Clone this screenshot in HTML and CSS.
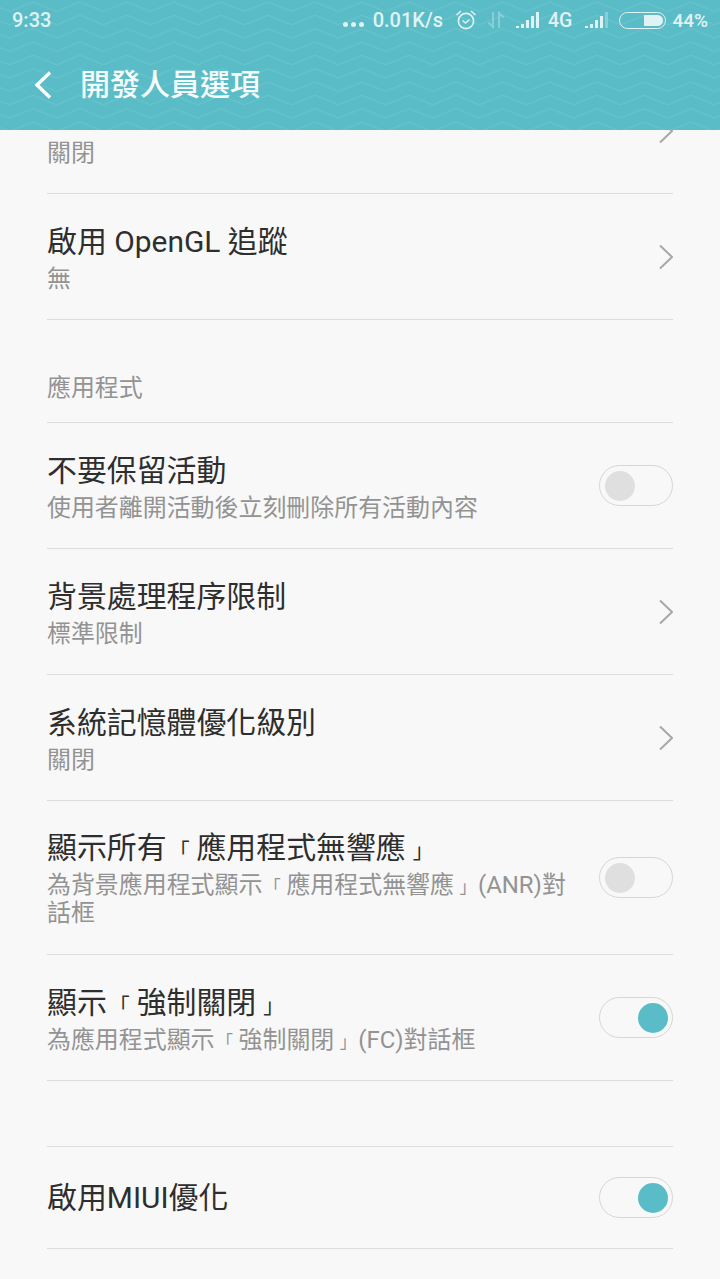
FILE: index.html
```html
<!DOCTYPE html>
<html lang="zh-Hant">
<head>
  <meta charset="UTF-8" />
  <title>開發人員選項</title>
  <link rel="stylesheet" href="styles.css">
</head>
<body>

<header class="topbar">
  <svg class="waves" width="720" height="130" aria-hidden="true">
    <defs>
      <pattern id="wave" width="47" height="13.33" patternUnits="userSpaceOnUse" x="9.5">
        <path d="M0 11.5 L23.5 2 L47 11.5" fill="none" stroke="#6bc5ce" stroke-width="1"/>
      </pattern>
    </defs>
    <rect width="720" height="130" fill="url(#wave)"/>
  </svg>

  <div class="statusbar">
    <span class="time">9:33</span>
    <div class="status-right">
      <span class="dots"><i></i><i></i><i></i></span>
      <span class="speed">0.01K/s</span>
      <svg class="alarm" width="22" height="22" viewBox="0 0 22 22">
        <circle cx="11" cy="12" r="7.6" fill="none" stroke="#e0f3f4" stroke-width="1.6"/>
        <path d="M7.5 11.5 L10.5 14 L14.5 10.5" fill="none" stroke="#e0f3f4" stroke-width="1.4"/>
        <path d="M1.5 6 L6 2 M20.5 6 L16 2" fill="none" stroke="#e0f3f4" stroke-width="1.6"/>
      </svg>
      <svg class="data" width="18" height="18" viewBox="0 0 18 18">
        <path d="M6 1 V16 L1.5 11.5 M12 17 V2 L16.5 6.5" fill="none" stroke="#a5dce0" stroke-opacity="0.6" stroke-width="2"/>
      </svg>
      <svg class="signal" width="25" height="18" viewBox="0 0 25 18">
        <path d="M1 15h3v2H1z M6 13h3v4H6z M11 9h3v8h-3z M16 5h3v12h-3z M21 1h3v16h-3z" fill="#e0f3f4"/>
      </svg>
      <span class="net">4G</span>
      <svg class="signal2" width="25" height="18" viewBox="0 0 25 18">
        <path d="M1 15h3v2H1z M6 13h3v4H6z M11 9h3v8h-3z M16 5h3v12h-3z" fill="#e0f3f4"/>
        <path d="M21 1h3v16h-3z" fill="#a5dce0" fill-opacity="0.6"/>
      </svg>
      <span class="battery"><b></b></span>
      <span class="percent">44%</span>
    </div>
  </div>

  <div class="titlebar">
    <svg class="back" width="22" height="30" viewBox="0 0 22 30">
      <path d="M18 2.5 L5 15 L18 27.5" fill="none" stroke="#fff" stroke-width="3.4"/>
    </svg>
    <h1>開發人員選項</h1>
  </div>
</header>

<main class="list">
  <div class="row cut">
    <div class="text"><p class="sub">關閉</p></div>
    <svg class="chev" width="15" height="26" viewBox="0 0 15 26"><path d="M2 1.5 L14 13 L2 24.5" /></svg>
  </div>
  <div class="row">
    <div class="text"><p class="name">啟用 OpenGL 追蹤</p><p class="sub">無</p></div>
    <svg class="chev" width="15" height="26" viewBox="0 0 15 26"><path d="M2 1.5 L14 13 L2 24.5" /></svg>
  </div>
  <div class="section">應用程式</div>
  <div class="row">
    <div class="text"><p class="name">不要保留活動</p><p class="sub">使用者離開活動後立刻刪除所有活動內容</p></div>
    <span class="switch"></span>
  </div>
  <div class="row">
    <div class="text"><p class="name">背景處理程序限制</p><p class="sub">標準限制</p></div>
    <svg class="chev" width="15" height="26" viewBox="0 0 15 26"><path d="M2 1.5 L14 13 L2 24.5" /></svg>
  </div>
  <div class="row">
    <div class="text"><p class="name">系統記憶體優化級別</p><p class="sub">關閉</p></div>
    <svg class="chev" width="15" height="26" viewBox="0 0 15 26"><path d="M2 1.5 L14 13 L2 24.5" /></svg>
  </div>
  <div class="row tall">
    <div class="text"><p class="name">顯示所有<span class="qo">「</span>應用程式無響應<span class="qc">」</span></p><p class="sub">為背景應用程式顯示<span class="qo">「</span>應用程式無響應<span class="qc">」</span>(ANR)對話框</p></div>
    <span class="switch"></span>
  </div>
  <div class="row">
    <div class="text"><p class="name">顯示<span class="qo">「</span>強制關閉<span class="qc">」</span></p><p class="sub">為應用程式顯示<span class="qo">「</span>強制關閉<span class="qc">」</span>(FC)對話框</p></div>
    <span class="switch on"></span>
  </div>
  <div class="gap"></div>
  <div class="row single">
    <div class="text"><p class="name">啟用MIUI優化</p></div>
    <span class="switch on"></span>
  </div>
</main>

</body>
</html>
```

FILE: styles.css
```css
html, body {
  margin: 0;
  padding: 0;
}
body {
  width: 720px;
  height: 1279px;
  overflow: hidden;
  background: #f8f8f8;
  color: #2e2e2e;
  font-family: Roboto, "Noto Sans CJK TC", sans-serif;
  text-spacing-trim: space-all;
}
p, h1 {
  margin: 0;
}

.topbar {
  position: relative;
  z-index: 2;
  height: 130px;
  background: #5abcc6;
  color: #e0f3f4;
  overflow: hidden;
}
.waves {
  position: absolute;
  left: 0;
  top: 0;
}
.statusbar {
  position: relative;
  height: 40px;
  display: flex;
  align-items: center;
  justify-content: space-between;
  padding: 0 12px;
  font-size: 20px;
  font-weight: 500;
}
.status-right {
  display: flex;
  align-items: center;
}
.dots {
  display: flex;
  gap: 3px;
  margin-top: 8px;
  margin-right: 9px;
}
.dots i {
  width: 5px;
  height: 5px;
  border-radius: 50%;
  background: #e0f3f4;
}
.alarm {
  margin-left: 12px;
}
.data {
  margin-left: 10px;
}
.signal {
  margin-left: 10px;
}
.net {
  margin-left: 8px;
  font-size: 19.5px;
}
.signal2 {
  margin-left: 12px;
}
.battery {
  display: flex;
  justify-content: flex-end;
  box-sizing: border-box;
  width: 47px;
  height: 17px;
  margin-left: 10px;
  padding: 2px;
  border: 1px solid #e0f3f4;
  border-radius: 9px;
}
.battery b {
  width: 19px;
  background: #e0f3f4;
  border-radius: 1px 6px 6px 1px;
}
.percent {
  margin-left: 6px;
  font-size: 19px;
}
.titlebar {
  position: relative;
  display: flex;
  align-items: center;
  height: 90px;
  padding-left: 32px;
  box-sizing: border-box;
}
.titlebar h1 {
  margin-left: 26px;
  color: #f6fcfc;
  font-size: 30px;
  font-weight: 500;
  line-height: 40px;
}

.list {
  margin: -62px 47px 0;
}
.row {
  display: flex;
  align-items: center;
  justify-content: space-between;
  height: 126px;
  box-sizing: border-box;
  border-bottom: 1px solid #dddddd;
}
.row.tall {
  height: 154px;
}
.row.single {
  height: 103px;
  border-top: 1px solid #dddddd;
}
.text {
  width: 530px;
  padding-top: 1px;
}
.cut .text {
  padding-top: 41px;
}
.tall .text {
  padding-bottom: 2px;
}
.name {
  font-size: 29.9px;
  line-height: 40px;
}
.sub {
  margin-top: 3px;
  color: #939393;
  font-size: 23.95px;
  line-height: 28px;
}
/* the corner brackets are small in the original font */
.qo, .qc {
  display: inline-block;
  box-sizing: border-box;
  width: 1.43em;
  font-size: 0.7em;
  line-height: 1;
}
.qo {
  padding-left: 0.1em;
}
.qc {
  padding-left: 0.33em;
}
.section {
  display: flex;
  align-items: flex-end;
  height: 103px;
  box-sizing: border-box;
  padding-bottom: 19px;
  border-bottom: 1px solid #dddddd;
  color: #939393;
  font-size: 23.95px;
  line-height: 30px;
}
.gap {
  height: 65px;
}
.chev {
  flex: none;
}
.chev path {
  fill: none;
  stroke: #a8a8a8;
  stroke-width: 2;
}
.switch {
  flex: none;
  position: relative;
  width: 74px;
  height: 41px;
  box-sizing: border-box;
  border: 1px solid #d6d6d6;
  border-radius: 21px;
}
.switch::after {
  content: "";
  position: absolute;
  left: 5px;
  top: 5px;
  width: 30px;
  height: 30px;
  border-radius: 50%;
  background: #dfdfdf;
}
.switch.on::after {
  left: 38px;
  background: #5abcc6;
}
```
